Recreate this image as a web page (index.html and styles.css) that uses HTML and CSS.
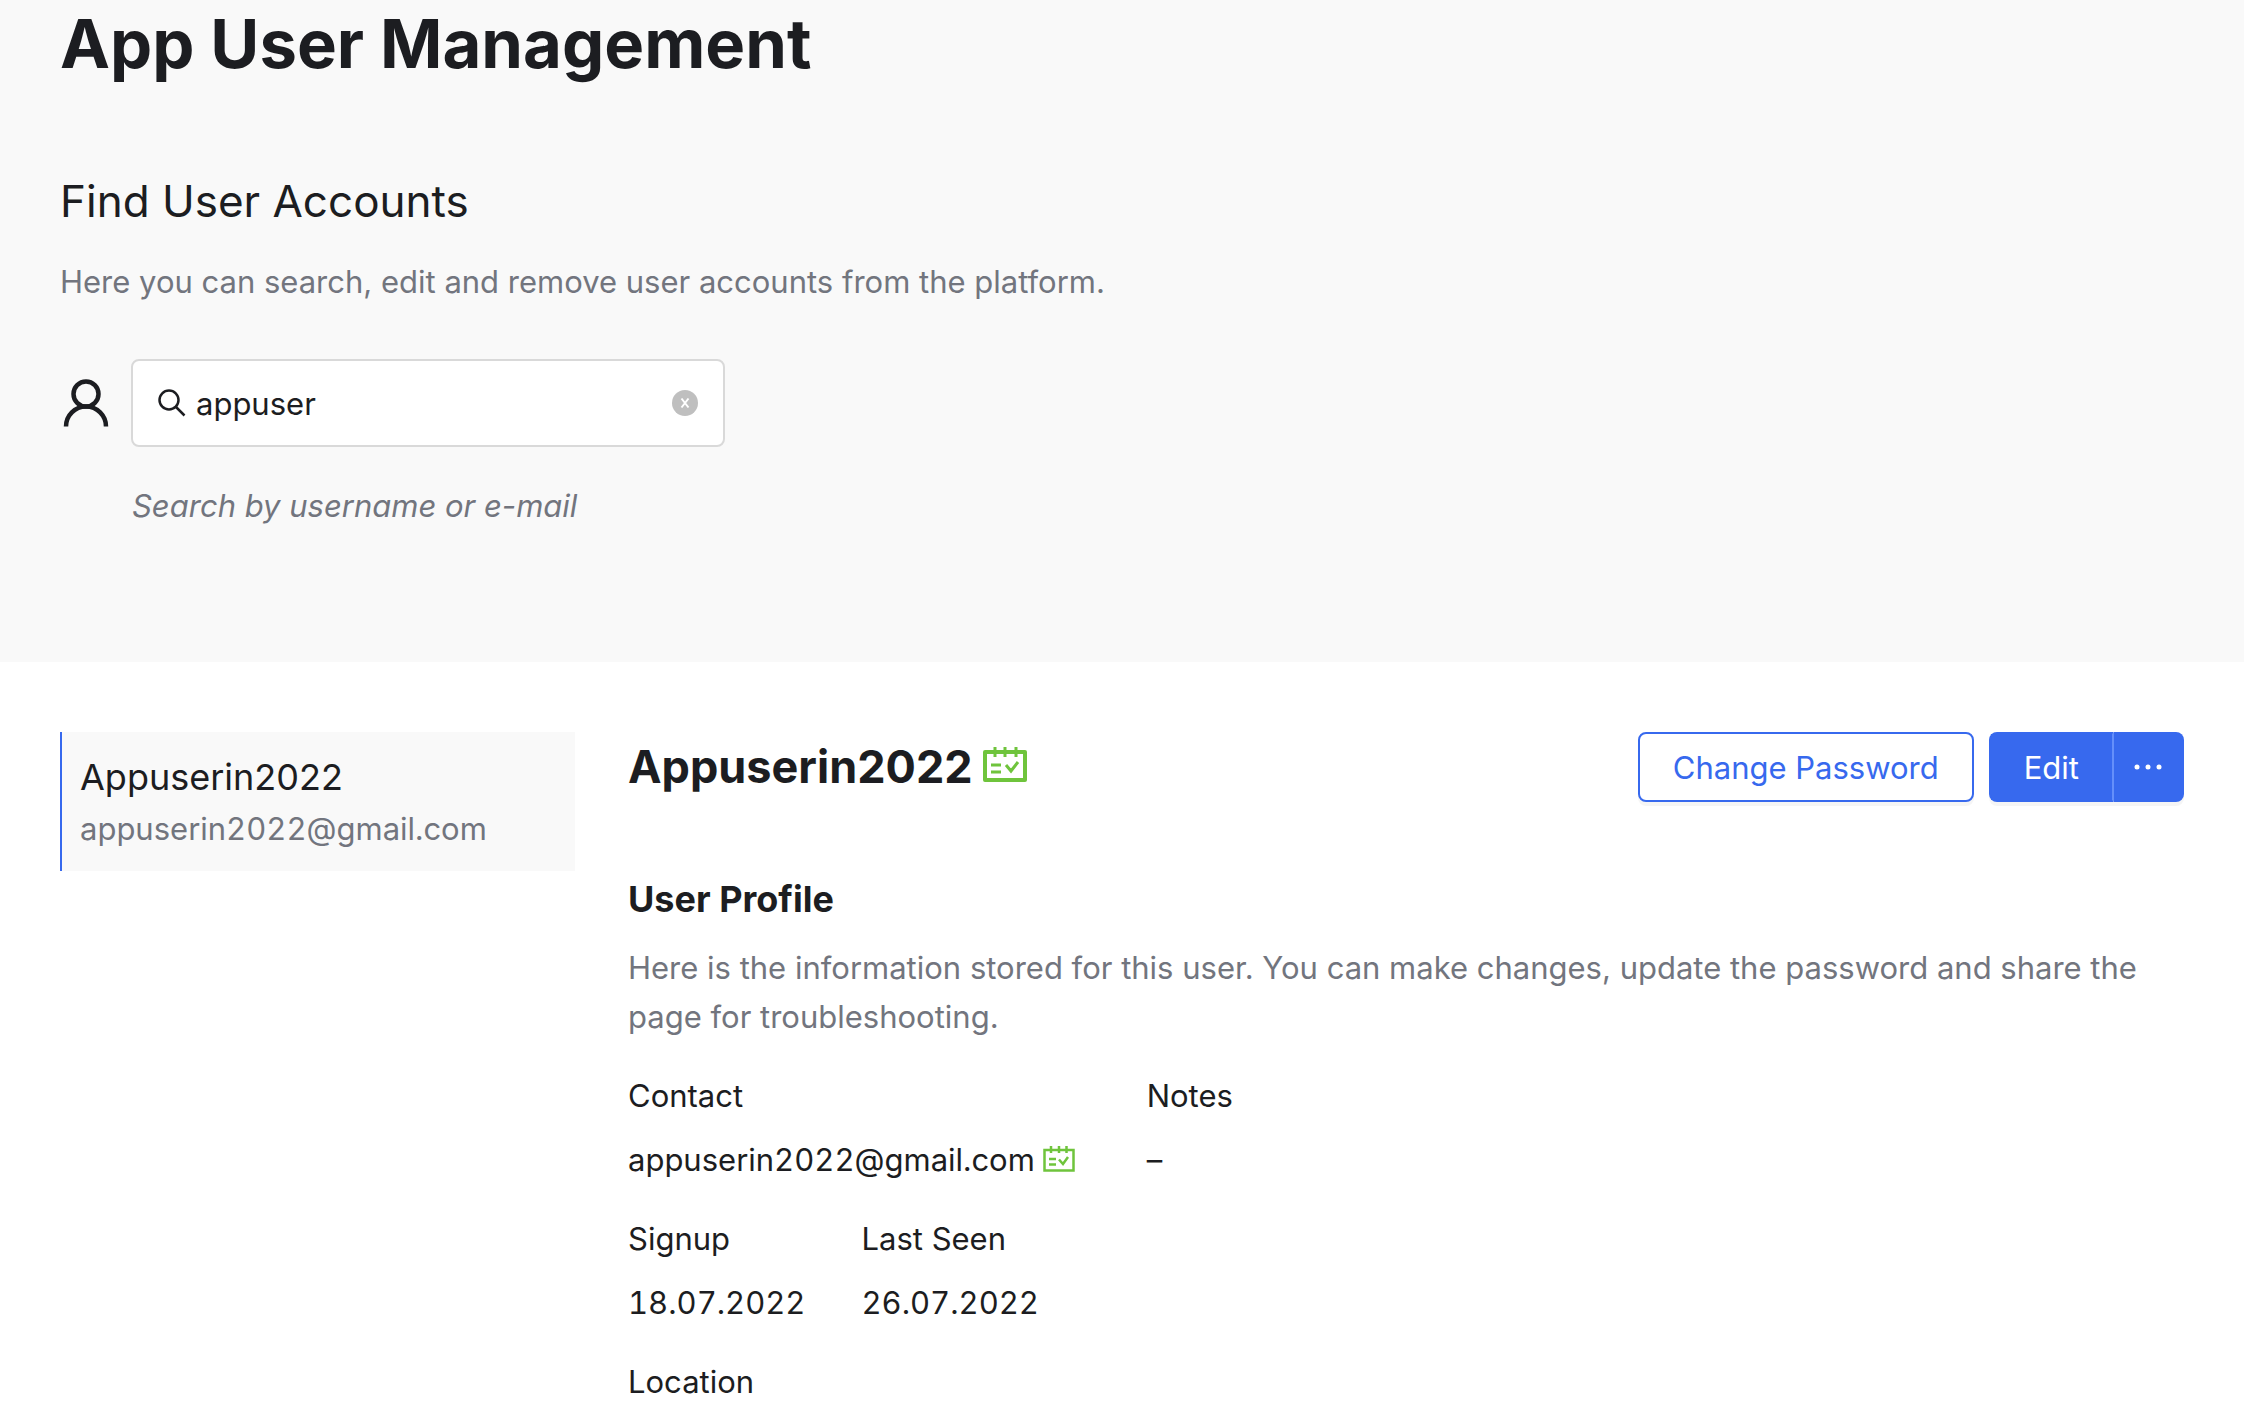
FILE: index.html
```html
<!DOCTYPE html>
<html lang="en">
<head>
  <meta charset="UTF-8">
  <meta name="viewport" content="width=device-width, initial-scale=1.0">
  <title>App User Management</title>
  <link rel="stylesheet" href="styles.css">
</head>
<body>
  <svg class="sprite" aria-hidden="true">
    <symbol id="calendar-check" viewBox="0 0 44 36">
      <path fill="none" stroke="currentColor" stroke-width="4" stroke-linejoin="round" d="M2 5h40v28H2z"/>
      <path fill="none" stroke="currentColor" stroke-width="3" d="M12 0v10M22 0v10M33 0v10M8 18h10M8 25h10M23 18l5 6 7-9"/>
    </symbol>
  </svg>

  <header class="page-header">
    <h1>App User Management</h1>
    <h2>Find User Accounts</h2>
    <p class="muted">Here you can search, edit and remove user accounts from the platform.</p>
    <form class="search">
      <svg class="user-icon" viewBox="0 0 46 48" fill="none" stroke="currentColor" stroke-width="4.500" aria-hidden="true">
        <circle cx="23" cy="15" r="12.500"/>
        <path d="M3 47.500a20 20 0 0 1 40 0"/>
      </svg>
      <div class="search-box">
        <svg class="search-icon" viewBox="0 0 28 28" fill="none" stroke="currentColor" stroke-width="2.500" aria-hidden="true">
          <circle cx="11" cy="11" r="9.500"/>
          <path d="M17.500 17.500l9 9"/>
        </svg>
        <input type="text" id="search" value="appuser" aria-label="Search by username or e-mail">
        <button type="reset" class="clear" aria-label="Clear">
          <svg viewBox="0 0 26 26" aria-hidden="true">
            <circle cx="13" cy="13" r="13" fill="#bfbfbf"/>
            <path d="M9.500 8.500l7 9M16.500 8.500l-7 9" stroke="#fff" stroke-width="2"/>
          </svg>
        </button>
      </div>
    </form>
    <label class="hint muted" for="search">Search by username or e-mail</label>
  </header>

  <main class="content">
    <nav class="results">
      <a href="#" class="result active">
        <span class="result-name">Appuserin2022</span>
        <span class="result-email muted">appuserin2022@gmail.com</span>
      </a>
    </nav>

    <section class="detail">
      <div class="detail-header">
        <h2>Appuserin2022 <svg class="verified-large"><use href="#calendar-check"/></svg></h2>
        <div class="actions">
          <button class="btn btn-outline">Change Password</button>
          <div class="btn-group">
            <button class="btn btn-primary">Edit</button>
            <button class="btn btn-primary btn-more" aria-label="More">
              <svg viewBox="0 0 28 6" fill="currentColor" aria-hidden="true">
                <circle cx="3" cy="3" r="2.500"/>
                <circle cx="14" cy="3" r="2.500"/>
                <circle cx="25" cy="3" r="2.500"/>
              </svg>
            </button>
          </div>
        </div>
      </div>

      <h3>User Profile</h3>
      <p class="muted">Here is the information stored for this user. You can make changes, update the password and share the page for troubleshooting.</p>

      <div class="info">
        <dl>
          <dt>Contact</dt>
          <dd>appuserin2022@gmail.com <svg class="verified-small" viewBox="0 0 32 26" fill="none" stroke="currentColor" aria-hidden="true">
            <path stroke-width="2.500" d="M1.500 4h29v20.500h-29z"/>
            <path stroke-width="2.500" d="M8 0v7M16 0v7M23.500 0v7M6 13h7M6 18.500h7M16 13.500l4 4.500 5-7"/>
          </svg></dd>
        </dl>
        <dl>
          <dt>Notes</dt>
          <dd>–</dd>
        </dl>
      </div>
      <div class="dates">
        <dl>
          <dt>Signup</dt>
          <dd>18.07.2022</dd>
        </dl>
        <dl>
          <dt>Last Seen</dt>
          <dd>26.07.2022</dd>
        </dl>
      </div>
      <dl>
        <dt>Location</dt>
      </dl>
    </section>
  </main>
</body>
</html>
```
FILE: styles.css
```css
* {
  box-sizing: border-box;
}
body {
  margin: 0;
  font-family: Inter, "Liberation Sans", sans-serif;
  font-size: 31px;
  line-height: 49px;
  color: #1c1d21;
  background: #fff;
}
h1, h2, h3, p, dl, dd {
  margin: 0;
}
button, input {
  font: inherit;
  color: inherit;
}
.sprite {
  display: none;
}
.muted {
  color: #72757e;
}

/* search header */
.page-header {
  background: #f9f9f9;
  padding: 4px 60px 132px;
}
.page-header h1 {
  font-size: 67px;
  line-height: 80px;
  font-weight: 700;
  margin-bottom: 87px;
}
.page-header h2 {
  font-size: 44px;
  line-height: 60px;
  font-weight: 400;
  margin-bottom: 26px;
}
.search {
  display: flex;
  align-items: center;
  gap: 22px;
  margin: 53px 0 34px;
}
.user-icon {
  width: 46px;
  height: 48px;
  margin-left: 3px;
}
.search-box {
  display: flex;
  align-items: center;
  gap: 10px;
  width: 594px;
  height: 88px;
  padding: 0 25px;
  background: #fff;
  border: 2px solid #d9d9d9;
  border-radius: 8px;
}
.search-icon {
  flex: none;
  width: 28px;
  height: 28px;
}
.search-box input {
  flex: 1;
  min-width: 0;
  padding: 0;
  border: 0;
  outline: 0;
  background: none;
}
.clear {
  display: flex;
  padding: 0;
  border: 0;
  background: none;
  cursor: pointer;
}
.clear svg {
  width: 26px;
  height: 26px;
}
.hint {
  display: block;
  padding-left: 72px;
  font-style: italic;
}

/* results and detail */
.content {
  display: grid;
  grid-template-columns: 1fr 3fr;
  padding: 70px 60px 0;
}
.results {
  margin-right: 16px;
}
.result {
  display: flex;
  flex-direction: column;
  gap: 2px;
  padding: 20px 18px 18px;
  color: inherit;
  text-decoration: none;
}
.result.active {
  background: #f9f9f9;
  border-left: 2px solid #3769ee;
}
.result-name {
  font-size: 36px;
  line-height: 50px;
}
.result-email,
dd {
  font-variant-numeric: tabular-nums;
}
.detail {
  padding-left: 37px;
}
.detail-header {
  display: flex;
  justify-content: space-between;
  align-items: center;
  margin-bottom: 70px;
}
.detail-header h2 {
  font-size: 45px;
  line-height: 60px;
}
.detail h3 {
  font-size: 36px;
  line-height: 54px;
  margin-bottom: 17px;
}
.verified-large,
.verified-small {
  color: #6fc43c;
}
.verified-large {
  width: 44px;
  height: 36px;
}
.verified-small {
  width: 32px;
  height: 26px;
  vertical-align: -1px;
}
.actions {
  display: flex;
  gap: 15px;
}
.btn-group {
  display: flex;
}
.btn {
  height: 70px;
  padding: 0 33px;
  border: 2px solid #3769ee;
  border-radius: 8px;
  box-shadow: 0 4px 0 rgba(0, 0, 0, 0.04);
  cursor: pointer;
}
.btn-outline {
  background: #fff;
  color: #3769ee;
}
.btn-primary {
  background: #3769ee;
  color: #fff;
}
.btn-group .btn:first-child {
  border-right-color: #648ffa;
  border-radius: 8px 0 0 8px;
}
.btn-group .btn-more {
  display: flex;
  align-items: center;
  padding: 0 20px;
  border-left: 0;
  border-radius: 0 8px 8px 0;
}
.btn-more svg {
  width: 28px;
  height: 6px;
}
.info {
  display: grid;
  grid-template-columns: repeat(3, 1fr);
  margin-top: 30px;
}
.dates {
  display: flex;
  gap: 56px;
}
dt {
  margin-bottom: 15px;
}
dd {
  margin-bottom: 30px;
}
```
